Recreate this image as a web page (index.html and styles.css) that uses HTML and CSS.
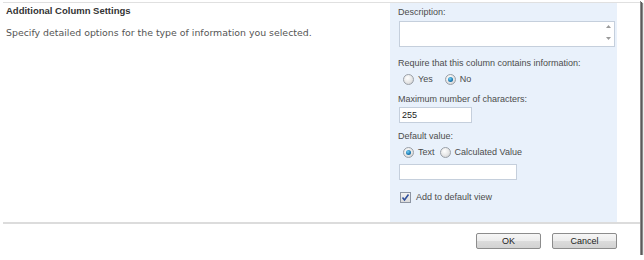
FILE: index.html
```html
<!DOCTYPE html>
<html>
<head>
<meta charset="utf-8">
<link rel="stylesheet" href="styles.css">
</head>
<body>
<div class="frame">
  <div class="section">
    <div class="left">
      <div class="title">Additional Column Settings</div>
      <div class="desc">Specify detailed options for the type of information you selected.</div>
    </div>
    <div class="panel">
      <div class="label first">Description:</div>
      <div class="textarea">
        <div class="scroll">
          <svg width="7" height="22" viewBox="0 0 7 22"><path d="M1 5 L3.5 2 L6 5 Z" fill="#9a9a9a"/><path d="M1 14 L3.5 17 L6 14 Z" fill="#9a9a9a"/></svg>
        </div>
      </div>
      <div class="label l-req">Require that this column contains information:</div>
      <div class="radios r1">
        <span class="opt yes"><span class="radio"></span>Yes</span>
        <span class="opt"><span class="radio on"></span>No</span>
      </div>
      <div class="label l-max">Maximum number of characters:</div>
      <div class="input short">255</div>
      <div class="label l-def">Default value:</div>
      <div class="radios r2">
        <span class="opt"><span class="radio on"></span>Text</span>
        <span class="opt"><span class="radio"></span>Calculated Value</span>
      </div>
      <div class="input long"></div>
      <div class="check-row"><span class="check"><svg width="9" height="9" viewBox="0 0 9 9"><path d="M1.5 4.5 L3.5 7 L7.5 1.5" fill="none" stroke="#2f4f9c" stroke-width="1.6"/></svg></span>Add to default view</div>
    </div>
  </div>
  <div class="footer">
    <button class="btn">OK</button>
    <button class="btn">Cancel</button>
  </div>
</div>
</body>
</html>
```

FILE: styles.css
```css
html, body {
  margin: 0;
  padding: 0;
  background: #ffffff;
}
body {
  font-family: "Liberation Sans", Tahoma, sans-serif;
  font-size: 9px;
  color: #4c4c4c;
}
.frame {
  width: 640px;
  height: 255px;
  background: #fff;
  box-shadow: 1px 1px 0 #8a8a8a, 2px 2px 0 #5a5a5a, 3px 3px 1px #888;
  display: flex;
  flex-direction: column;
}
.section {
  margin-top: 2px;
  border-top: 1px solid #e0e0e0;
  border-bottom: 2px solid #dcdcdc;
  margin-left: 3px;
  height: 219px;
  display: flex;
}
.left {
  width: 384px;
  padding: 1px 0 0 3px;
}
.title {
  font-family: "Liberation Sans", Tahoma, sans-serif;
  font-weight: bold;
  font-size: 9.5px;
  color: #333;
  height: 14px;
  line-height: 14px;
}
.desc {
  font-family: "DejaVu Sans", Verdana, sans-serif;
  font-size: 9.4px;
  margin-top: 8px;
  line-height: 13px;
  color: #555;
}
.panel {
  width: 219px;
  background: #e9f1fb;
  padding: 0 0 0 8px;
}
.label {
  line-height: 12px;
  height: 12px;
}
.label.first {
  margin-top: 3px;
}
.l-req {
  margin-top: 10px;
}
.l-max {
  margin-top: 8px;
}
.l-def {
  margin-top: 7px;
}
.textarea {
  margin-top: 3px;
  width: 214px;
  height: 24px;
  background: #fff;
  border: 1px solid #c5cfdc;
  margin-left: 1px;
  display: flex;
  justify-content: flex-end;
}
.scroll {
  width: 12px;
  display: flex;
  align-items: center;
  justify-content: center;
}
.radios {
  display: flex;
  margin-top: 4px;
  height: 12px;
  align-items: center;
  padding-left: 5px;
}
.r1 {
  gap: 12px;
}
.r2 {
  gap: 5px;
}
.opt {
  display: flex;
  align-items: center;
  gap: 4px;
}
.radio {
  width: 9px;
  height: 9px;
  border-radius: 50%;
  border: 1px solid #9aa0a8;
  background: radial-gradient(circle at 40% 35%, #ffffff 0%, #e6e6e6 55%, #c6c6c6 100%);
  position: relative;
}
.radio.on::after {
  content: "";
  position: absolute;
  left: 2px;
  top: 2px;
  width: 5px;
  height: 5px;
  border-radius: 50%;
  background: radial-gradient(circle at 40% 35%, #78d0f5 0%, #1e7fb8 55%, #0b4b7a 100%);
}
.input {
  height: 14px;
  background: #fff;
  border: 1px solid #c5cfdc;
  margin-left: 1px;
  line-height: 14px;
  padding-left: 2px;
  color: #222;
}
.input.short {
  margin-top: 2px;
  width: 69px;
}
.input.long {
  width: 114px;
  margin-top: 6px;
}
.check-row {
  margin-top: 11px;
  display: flex;
  align-items: center;
  gap: 5px;
  height: 12px;
  padding-left: 2px;
}
.check {
  width: 9px;
  height: 9px;
  border: 1px solid #8d95a3;
  background: linear-gradient(#f2f2f2, #dcdcdc);
  display: flex;
  align-items: center;
  justify-content: center;
}
.footer {
  display: flex;
  justify-content: flex-end;
  gap: 11px;
  padding: 9px 23px 0 0;
}
.btn {
  width: 65px;
  height: 16px;
  margin: 0;
  padding: 0;
  font-family: "Liberation Sans", Tahoma, sans-serif;
  font-size: 9px;
  color: #222;
  border: 1px solid #8c8c8c;
  border-radius: 2px;
  background: linear-gradient(#f6f6f6 0%, #ececec 50%, #dcdcdc 51%, #d2d2d2 100%);
}
```
